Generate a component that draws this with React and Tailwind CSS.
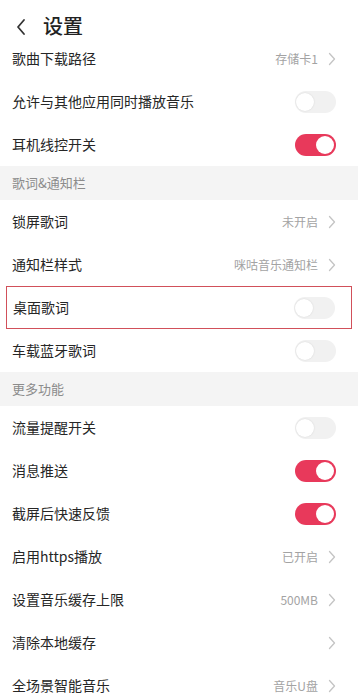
import { useState } from "react";

const Chevron = () => (
  <svg width="8" height="14" viewBox="0 0 8 14" fill="none">
    <path d="M1.5 1.5L6.5 7L1.5 12.5" stroke="#c4c4c4" strokeWidth="1.3" strokeLinecap="round" strokeLinejoin="round" />
  </svg>
);

function Toggle({ on }) {
  return (
    <div
      className={`relative w-[41px] h-[22px] rounded-full ${
        on ? "bg-[#e8395b]" : "bg-[#f1f1f1]"
      }`}
    >
      <div
        className={`absolute top-[2px] w-[18px] h-[18px] rounded-full bg-white ${
          on ? "right-[2px]" : "left-[1px] shadow-[0_0_2px_rgba(0,0,0,0.12)]"
        }`}
      />
    </div>
  );
}

function Row({ label, value, toggle, on, arrow, highlight }) {
  return (
    <div
      className={`h-[43px] flex items-center justify-between ${
        highlight ? "mx-[6px] pl-[6px] pr-[16px] border border-[#d1505a]" : "pl-[12px] pr-[22px]"
      }`}
    >
      <span className="text-[14px] text-[#262626]">{label}</span>
      {toggle ? (
        <Toggle on={on} />
      ) : (
        <div className="flex items-center gap-[10px]">
          {value && <span className="text-[12px] text-[#a3a3a3]">{value}</span>}
          {arrow && <Chevron />}
        </div>
      )}
    </div>
  );
}

function Section({ title }) {
  return (
    <div className="h-[34px] bg-[#f4f4f4] flex items-center pl-[12px]">
      <span className="text-[13px] text-[#8c8c8c]">{title}</span>
    </div>
  );
}

export default function App() {
  const [rows] = useState(null);
  return (
    <div
      className="w-[358px] h-[695px] overflow-hidden bg-white"
      style={{ fontFamily: '"Noto Sans CJK SC", "Noto Sans", sans-serif' }}
    >
      {/* Header */}
      <div className="h-[37px] flex items-start pl-[15px] pt-[12px]">
        <svg width="12" height="18" viewBox="0 0 12 18" fill="none" className="mt-[6px]">
          <path d="M9 2L3 9L9 16" stroke="#333" strokeWidth="1.8" strokeLinecap="round" strokeLinejoin="round" />
        </svg>
        <span className="ml-[16px] text-[20px] leading-[28px] font-medium text-[#222]">设置</span>
      </div>

      <Row label="歌曲下载路径" value="存储卡1" arrow />
      <Row label="允许与其他应用同时播放音乐" toggle />
      <Row label="耳机线控开关" toggle on />

      <Section title="歌词&通知栏" />
      <Row label="锁屏歌词" value="未开启" arrow />
      <Row label="通知栏样式" value="咪咕音乐通知栏" arrow />
      <Row label="桌面歌词" toggle highlight />
      <Row label="车载蓝牙歌词" toggle />

      <Section title="更多功能" />
      <Row label="流量提醒开关" toggle />
      <Row label="消息推送" toggle on />
      <Row label="截屏后快速反馈" toggle on />
      <Row label="启用https播放" value="已开启" arrow />
      <Row label="设置音乐缓存上限" value="500MB" arrow />
      <Row label="清除本地缓存" arrow />
      <Row label="全场景智能音乐" value="音乐U盘" arrow />
      {rows}
    </div>
  );
}
